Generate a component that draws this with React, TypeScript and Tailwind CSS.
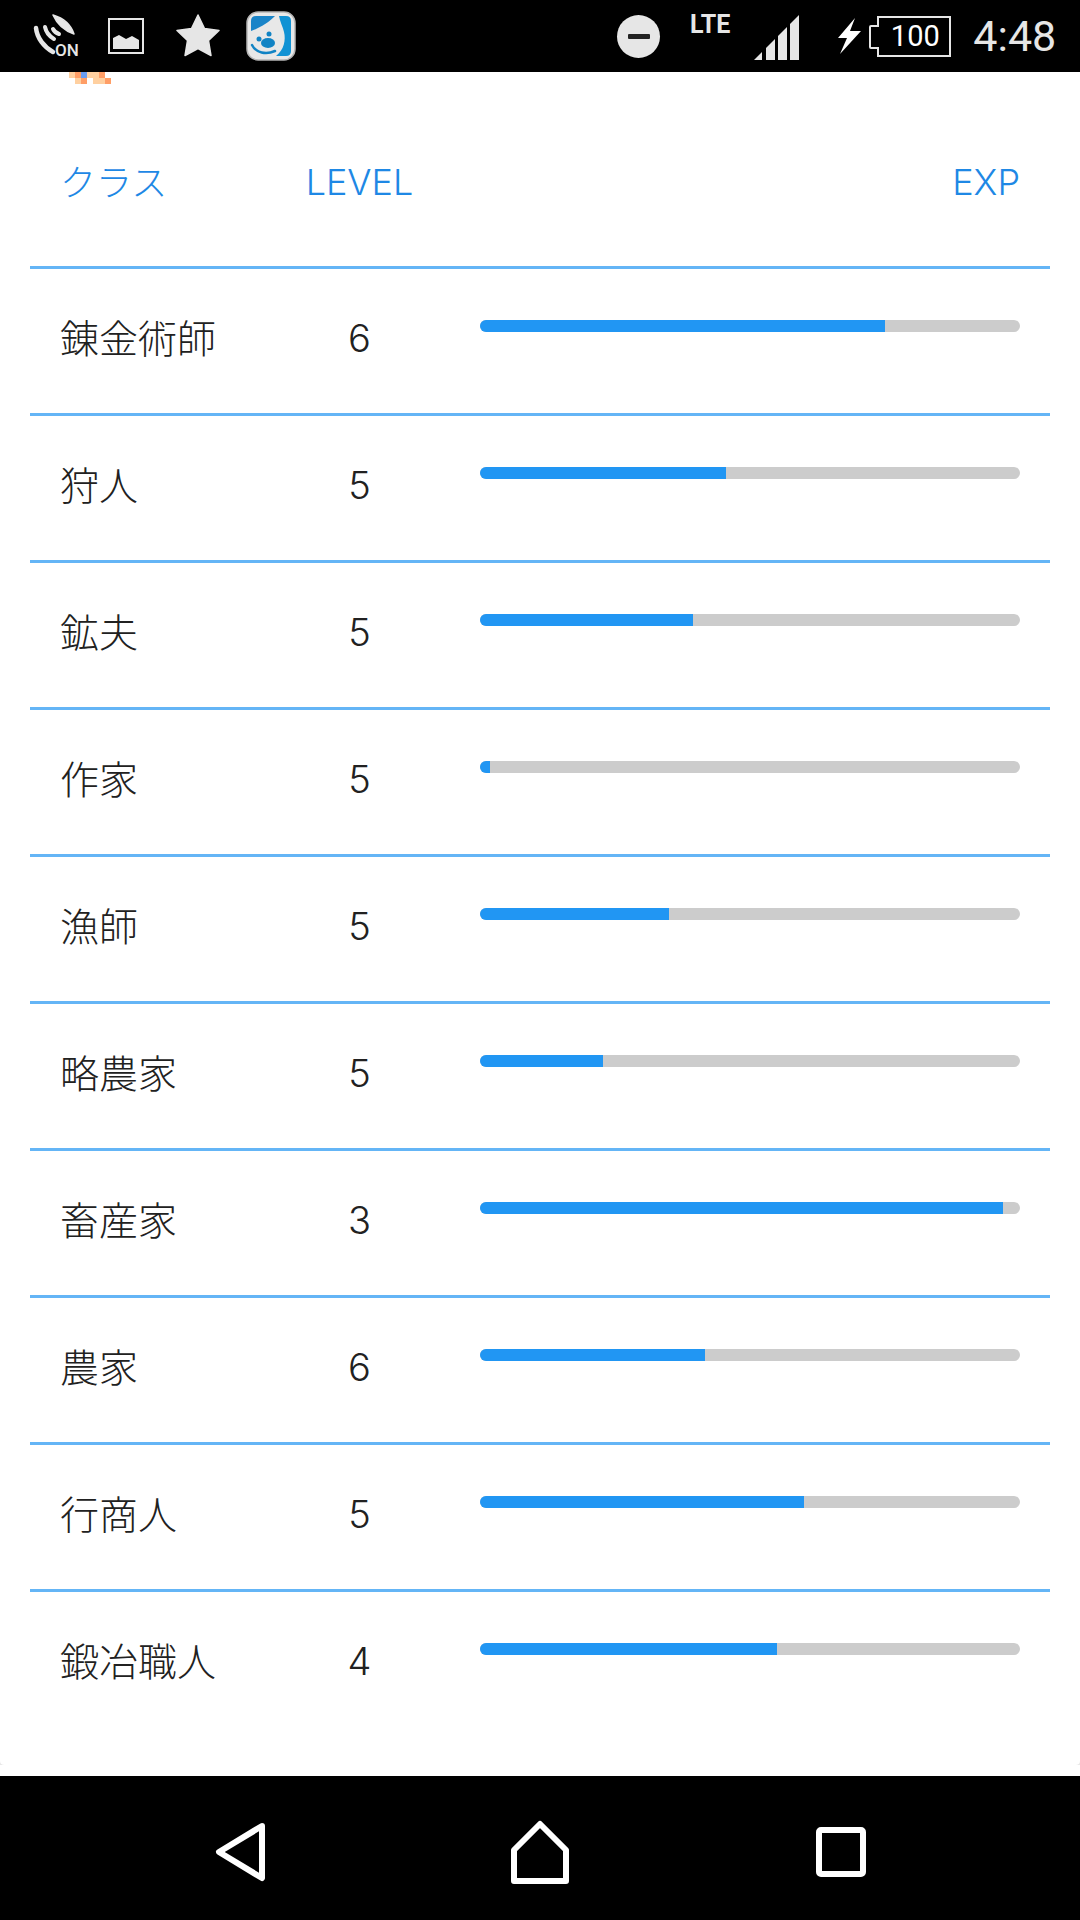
const classes = [
  { name: '錬金術師', level: 6, exp: 75 },
  { name: '狩人', level: 5, exp: 45.5 },
  { name: '鉱夫', level: 5, exp: 39.5 },
  { name: '作家', level: 5, exp: 1.8 },
  { name: '漁師', level: 5, exp: 35 },
  { name: '略農家', level: 5, exp: 22.7 },
  { name: '畜産家', level: 3, exp: 96.8 },
  { name: '農家', level: 6, exp: 41.7 },
  { name: '行商人', level: 5, exp: 60 },
  { name: '鍛冶職人', level: 4, exp: 55 },
]

function StatusBar() {
  return (
    <div className="flex h-[72px] items-center bg-black text-[#e6e6e6]">
      <svg className="ml-[33px] h-[44px] w-[44px]" viewBox="0 0 44 44" fill="none">
        <path d="M20 1c10 3 18 10 21 19-9-3-17-10-21-19z" fill="#e6e6e6" stroke="#e6e6e6" strokeWidth="1.500" strokeLinejoin="round" />
        <path d="M20 15c1 2 3 4 6 5" stroke="#e6e6e6" strokeWidth="4" strokeLinecap="round" />
        <path d="M12 13c1 5 4 9 9 12" stroke="#e6e6e6" strokeWidth="4" strokeLinecap="round" />
        <path d="M3 14c1 10 8 19 17 24" stroke="#e6e6e6" strokeWidth="4.500" strokeLinecap="round" />
      </svg>
      <span className="ml-[-22px] mt-[28px] w-[22px] font-['Roboto',sans-serif] text-[17px] font-medium leading-none">ON</span>
      <svg className="ml-[31px] h-[36px] w-[36px]" viewBox="0 0 36 36" fill="none">
        <rect x="1" y="1" width="34" height="34" stroke="#e6e6e6" strokeWidth="2" />
        <path d="M5 31V20l6-3 7 4 6-3 7 4v9z" fill="#e6e6e6" />
      </svg>
      <svg className="ml-[32px] h-[44px] w-[44px]" viewBox="0 0 44 44">
        <path
          d="M22 1l6.5 13.5 14.5 2-10.500 10 2.500 15-13-7-13 7 2.500-15L1 16.500l14.500-2z"
          fill="#e6e6e6"
          stroke="#e6e6e6"
          strokeWidth="1.500"
          strokeLinejoin="round"
        />
      </svg>
      <svg className="ml-[26px] h-[50px] w-[50px]" viewBox="0 0 50 50">
        <rect x="1" y="1" width="48" height="48" rx="11" fill="#e8e8e8" stroke="#b5b5b5" strokeWidth="1.500" />
        <path d="M5 20V10q0-5 5-5h19c-6 6-15 12-24 15z" fill="#1a84c8" />
        <path d="M33 5h7q5 0 5 5v30q0 5-5 5H30c8-6 10-16 8-24-1-5-4-10-5-16z" fill="#1192d4" />
        <ellipse cx="22" cy="32" rx="7" ry="5" fill="#1183c4" />
        <circle cx="23" cy="23" r="2.500" fill="#1183c4" />
        <circle cx="13" cy="28" r="2.500" fill="#1183c4" />
        <path d="M6 34c4 8 14 10 23 6" fill="none" stroke="#1183c4" strokeWidth="2.500" strokeLinecap="round" />
      </svg>
      <div className="ml-[321px] flex h-[43px] w-[43px] items-center justify-center rounded-full bg-[#e6e6e6]">
        <div className="h-[5px] w-[22px] rounded-[1px] bg-[#222]" />
      </div>
      <span className="ml-[30px] mb-[24px] font-['Roboto',sans-serif] text-[25px] font-bold leading-none">LTE</span>
      <svg className="ml-[24px] mt-[3px] h-[45px] w-[45px]" viewBox="0 0 45 45" fill="#e6e6e6">
        <path d="M0 45l8-8v8z" />
        <path d="M12 45V33l9-9v21z" />
        <path d="M24 45V21l9-9v33z" />
        <path d="M36 45V9l9-9v45z" />
      </svg>
      <svg className="ml-[39px] h-[36px] w-[23px]" viewBox="0 0 23 36" fill="#fff">
        <path d="M17 0L0 20h9L2 36l21-23H12z" />
      </svg>
      <div className="relative ml-[8px] flex h-[41px] w-[82px] shrink-0 items-center justify-center pl-[10px] font-['Roboto',sans-serif] text-[29px] leading-none text-white">
        <svg className="absolute inset-0 h-[41px] w-[82px]" viewBox="0 0 82 41" fill="none">
          <path d="M9 1h72v39H9v-8H2a1 1 0 0 1-1-1V11a1 1 0 0 1 1-1h7z" stroke="#e6e6e6" strokeWidth="2" />
        </svg>
        100
      </div>
      <span className="ml-[22px] font-['Roboto',sans-serif] text-[43px] leading-none">4:48</span>
    </div>
  )
}

function Sprite() {
  return (
    <svg className="ml-[69px] block h-[12px] w-[42px]" viewBox="0 0 42 12" shapeRendering="crispEdges">
      <rect x="0" y="0" width="6" height="6" fill="#ffd0a0" />
      <rect x="6" y="0" width="6" height="6" fill="#ff9e66" />
      <rect x="12" y="0" width="6" height="6" fill="#6a9cf0" />
      <rect x="18" y="0" width="12" height="6" fill="#ffd0a0" />
      <rect x="30" y="0" width="6" height="6" fill="#ff9e66" />
      <rect x="6" y="6" width="6" height="6" fill="#ffd0a0" />
      <rect x="12" y="6" width="6" height="6" fill="#ff9e66" />
      <rect x="24" y="6" width="12" height="6" fill="#ffd0a0" />
      <rect x="36" y="6" width="6" height="6" fill="#ff9e66" />
    </svg>
  )
}

function ClassRow({ name, level, exp }: { name: string; level: number; exp: number }) {
  return (
    <div className="grid h-[147px] grid-cols-[239px_121px_1fr] items-center border-t-[3px] border-[#64b5f6] px-[30px]">
      <span className="pb-[10px] text-[39px] font-light leading-none text-[#212121]">{name}</span>
      <span className="pb-[6px] text-center font-['Inter',sans-serif] text-[38px] font-light leading-none text-[#212121]">{level}</span>
      <div className="pb-[30px] pl-[60px]">
        <div className="h-[12px] overflow-hidden rounded-full bg-[#cccccc]">
          <div className="h-full bg-[#2196f3]" style={{ width: `${exp}%` }} />
        </div>
      </div>
    </div>
  )
}

function NavBar() {
  return (
    <div className="flex h-[144px] items-center bg-black">
      <svg className="ml-[213px] mt-[8px] h-[62px] w-[56px]" viewBox="0 0 56 62" fill="none">
        <path d="M49 5L6 31l43 26z" stroke="#fff" strokeWidth="6" strokeLinejoin="round" />
      </svg>
      <svg className="ml-[239px] mt-[8px] h-[64px] w-[64px]" viewBox="0 0 64 64" fill="none">
        <path d="M32 4L6 30v31h52V30z" stroke="#fff" strokeWidth="6" strokeLinejoin="round" />
      </svg>
      <svg className="ml-[244px] mt-[8px] h-[50px] w-[50px]" viewBox="0 0 50 50" fill="none">
        <rect x="3" y="3" width="44" height="44" rx="2" stroke="#fff" strokeWidth="6" />
      </svg>
    </div>
  )
}

export default function App() {
  return (
    <div className="flex h-[1920px] w-[1080px] flex-col overflow-hidden bg-white font-['Noto_Sans_CJK_JP','Noto_Sans',sans-serif]">
      <StatusBar />
      <div className="h-[1693px] rounded-b-[4px] shadow-[0_1px_4px_rgba(0,0,0,0.25)]">
        <Sprite />
        <div className="grid h-[182px] grid-cols-[239px_121px_1fr] items-center px-[60px] pt-[13px] text-[36px] font-light leading-none text-[#1e88e5]">
          <span className="pb-[3px]">クラス</span>
          <span className="text-center font-['Inter',sans-serif]">LEVEL</span>
          <span className="text-right font-['Inter',sans-serif]">EXP</span>
        </div>
        <div className="mx-[30px]">
          {classes.map(c => (
            <ClassRow key={c.name} {...c} />
          ))}
        </div>
      </div>
      <div className="h-[11px] bg-white" />
      <NavBar />
    </div>
  )
}
